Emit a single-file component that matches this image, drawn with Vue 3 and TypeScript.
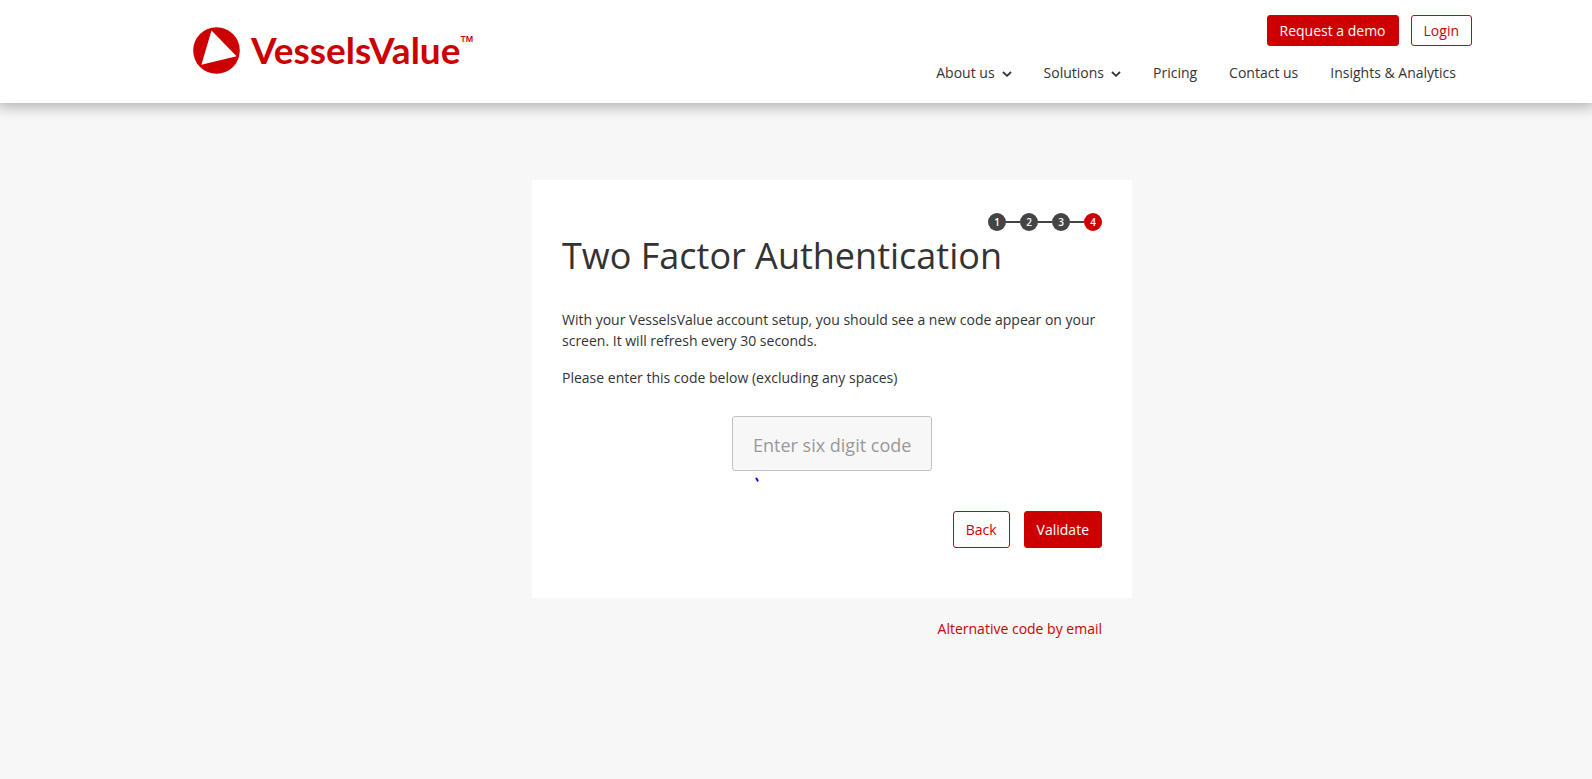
<script setup lang="ts">
import { ref } from 'vue'

interface NavItem {
  label: string
  menu: boolean
}

const navItems: NavItem[] = [
  { label: 'About us', menu: true },
  { label: 'Solutions', menu: true },
  { label: 'Pricing', menu: false },
  { label: 'Contact us', menu: false },
  { label: 'Insights & Analytics', menu: false },
]

const steps: number[] = [1, 2, 3, 4]
const currentStep = 4
const code = ref('')
</script>

<template>
  <div class="page">
    <header class="header">
      <a class="brand" href="#">
        <svg class="brand-mark" viewBox="0 0 47 47" aria-hidden="true">
          <circle cx="23.5" cy="23.5" r="23.3" fill="#c00" />
          <path d="M18.5 3.6 43.6 29.2 8.4 37.7Z" fill="#fff" />
        </svg>
        <span class="brand-name">VesselsValue</span>
        <span class="brand-tm">TM</span>
      </a>
      <div class="header-side">
        <div class="account">
          <button type="button" class="btn btn-solid">Request a demo</button>
          <button type="button" class="btn btn-outline">Login</button>
        </div>
        <nav class="nav">
          <a v-for="item in navItems" :key="item.label" class="nav-link" href="#">
            {{ item.label }}
            <svg v-if="item.menu" class="chevron" viewBox="0 0 10 6" aria-hidden="true">
              <path d="M1 1 5 4.8 9 1" fill="none" stroke="#333" stroke-width="1.8" />
            </svg>
          </a>
        </nav>
      </div>
    </header>

    <main class="main">
      <form class="card" @submit.prevent>
        <ol class="steps">
          <li v-for="step in steps" :key="step" class="step" :class="{ current: step === currentStep }">
            <span class="dot">{{ step }}</span>
          </li>
        </ol>
        <h1 class="title">Two Factor Authentication</h1>
        <p class="text">
          With your VesselsValue account setup, you should see a new code appear on your screen. It will
          refresh every 30 seconds.
        </p>
        <p class="text"><label for="code">Please enter this code below (excluding any spaces)</label></p>
        <div class="field">
          <input id="code" v-model="code" class="code" type="text" inputmode="numeric" placeholder="Enter six digit code" />
          <svg class="ink" viewBox="0 0 5 6" aria-hidden="true">
            <path d="M1.4 1.6 2.6 3.6" stroke="#00f" stroke-width="2" stroke-linecap="round" />
          </svg>
        </div>
        <div class="actions">
          <button type="button" class="btn btn-outline btn-tall">Back</button>
          <button type="submit" class="btn btn-solid btn-tall">Validate</button>
        </div>
      </form>
      <a class="alternative" href="#">Alternative code by email</a>
    </main>
  </div>
</template>

<style>
body {
  margin: 0;
  background: #f7f7f7;
}
</style>

<style scoped>
.page {
  min-height: 100vh;
  background: #f7f7f7;
  color: #333;
  font-family: 'Open Sans', 'Noto Sans', sans-serif;
  font-size: 14px;
  line-height: 21px;
}

.header {
  display: flex;
  justify-content: space-between;
  align-items: flex-start;
  box-sizing: border-box;
  min-height: 103px;
  padding: 15px 120px 16px 193px;
  background: #fff;
  box-shadow: 0 0 14px 3px rgba(0, 0, 0, 0.32);
}

.brand {
  display: flex;
  align-items: flex-start;
  padding-top: 12px;
  color: #c00;
  text-decoration: none;
  font-family: Lato, 'Open Sans', sans-serif;
}

.brand-mark {
  width: 47px;
  height: 47px;
  margin-right: 11px;
}

.brand-name {
  font-size: 37px;
  font-weight: 700;
  line-height: 46px;
}

.brand-tm {
  font-family: Inter, 'Open Sans', sans-serif;
  font-size: 8px;
  font-weight: 600;
  line-height: 24px;
}

.header-side {
  display: flex;
  flex-direction: column;
  align-items: flex-end;
  gap: 16px;
}

.account {
  display: flex;
  gap: 12px;
}

.btn {
  box-sizing: border-box;
  height: 31px;
  padding: 0 12px;
  border: 1px solid #c00;
  border-radius: 3px;
  font-family: inherit;
  font-size: 14px;
  line-height: 21px;
  cursor: pointer;
}

.btn-solid {
  background: #c00;
  color: #fff;
  font-weight: 500;
}

.btn-outline {
  background: #fff;
  color: #c00;
}

.btn-tall {
  height: 37px;
}

.nav {
  display: flex;
}

.nav-link {
  display: flex;
  align-items: center;
  gap: 7px;
  padding: 0 16px;
  color: #333;
  text-decoration: none;
}

.chevron {
  width: 10px;
  height: 6px;
  margin-top: 2px;
}

.main {
  display: flex;
  flex-direction: column;
  align-items: center;
  padding: 77px 120px 60px 192px;
}

.card {
  box-sizing: border-box;
  width: 100%;
  max-width: 600px;
  padding: 33px 30px 50px;
  background: #fff;
}

.steps {
  display: flex;
  justify-content: flex-end;
  margin: 0;
  padding: 0;
  list-style: none;
}

.step {
  display: flex;
  align-items: center;
}

.step + .step::before {
  content: '';
  width: 14px;
  height: 2px;
  background: #444;
}

.dot {
  width: 18px;
  height: 18px;
  border-radius: 50%;
  background: #444;
  color: #fff;
  font-size: 10px;
  font-weight: 600;
  line-height: 18px;
  text-align: center;
}

.current .dot {
  background: #c00;
}

.title {
  margin: 0 0 28px;
  font-size: 36px;
  font-weight: 400;
  line-height: 50px;
}

.text {
  margin: 0 0 16px;
}

.field {
  position: relative;
  width: 200px;
  margin: 28px auto 40px;
}

.code {
  display: block;
  box-sizing: border-box;
  width: 100%;
  height: 55px;
  padding: 3px 20px 0;
  border: 1px solid #c3c3c3;
  border-radius: 3px;
  background: #f7f7f7;
  color: #333;
  font-family: inherit;
  font-size: 18px;
}

.code::placeholder {
  color: #999;
}

.ink {
  position: absolute;
  top: 61px;
  left: 23px;
  width: 5px;
  height: 6px;
}

.actions {
  display: flex;
  justify-content: flex-end;
  gap: 14px;
}

.alternative {
  box-sizing: border-box;
  width: 100%;
  max-width: 600px;
  padding: 20px 30px 0;
  color: #c00;
  text-align: right;
  text-decoration: none;
}
</style>
